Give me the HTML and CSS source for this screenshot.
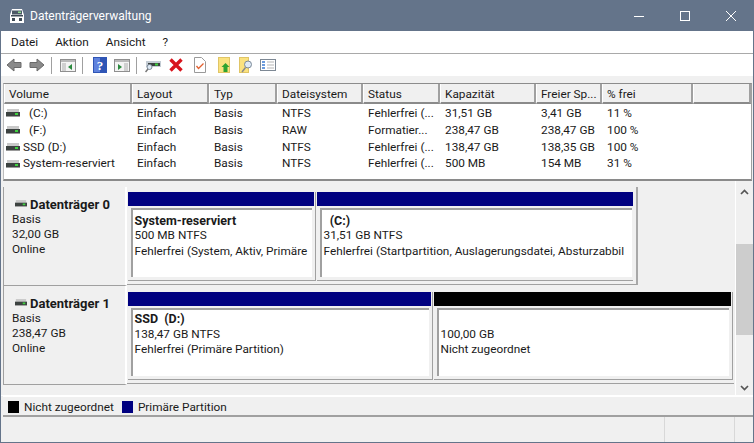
FILE: index.html
```html
<!DOCTYPE html>
<html lang="de">
<head>
<meta charset="utf-8">
<title>Datenträgerverwaltung</title>
<link rel="stylesheet" href="styles.css">
</head>
<body>
<svg class="defs" width="0" height="0">
  <symbol id="drive" viewBox="0 0 14 8">
    <rect x="1" y="0" width="12" height="3" fill="#c9c9c9"/>
    <rect x="0" y="3" width="14" height="4" fill="#3c4240"/>
    <rect x="9" y="4" width="3" height="2" fill="#3fd13f"/>
    <rect x="0" y="7" width="14" height="1" fill="#9a9a9a"/>
  </symbol>
</svg>
<div class="window">
  <header class="titlebar">
    <svg class="app-icon" viewBox="0 0 16 16"><path d="M3 1h10l2 6v8H1V7z" fill="#fff"/><rect x="2" y="7" width="12" height="1.5" fill="#3d4a55"/><rect x="3" y="2.5" width="10" height="4" fill="#4b5866"/><rect x="9" y="3.5" width="3" height="1.5" fill="#8fe08f"/><rect x="3" y="10" width="3" height="3" fill="#3d4a55"/><rect x="10" y="10" width="3" height="3" fill="#3d4a55"/></svg>
    <span class="title">Datenträgerverwaltung</span>
    <div class="winbtns">
      <svg viewBox="0 0 46 30"><rect x="18" y="15" width="10" height="1" fill="#fff"/></svg>
      <svg viewBox="0 0 46 30"><rect x="18.5" y="10.5" width="9" height="9" fill="none" stroke="#fff"/></svg>
      <svg viewBox="0 0 46 30"><path d="M18 10l10 10M28 10L18 20" stroke="#fff" fill="none"/></svg>
    </div>
  </header>
  <nav class="menubar"><span>Datei</span><span>Aktion</span><span>Ansicht</span><span>?</span></nav>
  <div class="toolbar">
    <svg class="tool" viewBox="0 0 16 16"><path d="M1 8l7-6v3.500h7v5H8V14z" fill="#8a8a8a" stroke="#6a6a6a"/></svg>
    <svg class="tool" viewBox="0 0 16 16"><path d="M15 8L8 2v3.500H1v5h7V14z" fill="#8a8a8a" stroke="#6a6a6a"/></svg>
    <i class="sep"></i>
    <svg class="tool" viewBox="0 0 16 16"><rect x=".5" y="2.500" width="15" height="12" fill="#f4f4f4" stroke="#8f8f8f"/><rect x="1" y="3" width="14" height="2" fill="#b9b9b9"/><rect x="2" y="6" width="4" height="8" fill="#d0d0d0"/><path d="M12 7v6L8 10z" fill="#2b8a3e"/></svg>
    <i class="sep"></i>
    <svg class="tool help" viewBox="0 0 14 16"><rect width="14" height="16" fill="#2f55b5"/><rect x="1" y="1" width="6" height="14" fill="#5f82dd"/><text x="7" y="13" class="help-q">?</text></svg>
    <svg class="tool" viewBox="0 0 16 16"><rect x=".5" y="2.500" width="15" height="12" fill="#f4f4f4" stroke="#8f8f8f"/><rect x="1" y="3" width="14" height="2" fill="#b9b9b9"/><rect x="10" y="6" width="4" height="8" fill="#d0d0d0"/><path d="M4 7v6l4-3z" fill="#2b8a3e"/></svg>
    <i class="sep"></i>
    <svg class="tool" viewBox="0 0 16 16"><rect x="1" y="4" width="15" height="6" fill="#c4ccd4"/><rect x="3" y="6" width="12" height="3" fill="#3c4240"/><rect x="10" y="6.500" width="3" height="2" fill="#3fd13f"/><circle cx="4.500" cy="10" r="2.500" fill="#dfeaf5" stroke="#7c8a99"/><path d="M3 12l-2.500 3" stroke="#777" stroke-width="1.500"/></svg>
    <svg class="tool" viewBox="0 0 16 16"><path d="M2.500 2.500l11 11M13.500 2.500l-11 11" stroke="#d8141c" stroke-width="3.400"/></svg>
    <svg class="tool narrow" viewBox="0 0 12 16"><path d="M.5.500h7l4 4v11H.500z" fill="#fff" stroke="#9a9a9a"/><path d="M2.500 9l2 2.500 5-5" fill="none" stroke="#e2602f" stroke-width="1.300"/></svg>
    <svg class="tool narrow" viewBox="0 0 12 16"><rect x=".5" y=".5" width="11" height="15" fill="#fbe27f" stroke="#e0c566"/><path d="M7.500 6l4 4H9.500v5h-4v-5H3.500z" fill="#2fa32f"/></svg>
    <svg class="tool find" viewBox="0 0 14 16"><rect x=".5" y=".5" width="9" height="15" fill="#fbe27f" stroke="#e0c566"/><circle cx="9" cy="7.500" r="3.500" fill="#dfeaf5" stroke="#7c8a99"/><path d="M6.500 10.500L3 15" stroke="#8a8a8a" stroke-width="1.500"/></svg>
    <svg class="tool" viewBox="0 0 16 16"><rect x=".5" y="2.500" width="15" height="11" fill="#fff" stroke="#7d8894"/><path d="M2 5h3M2 8h3M2 11h3" stroke="#3d7bd1" stroke-width="1.500"/><path d="M7 5h7M7 8h7M7 11h7" stroke="#b5b5b5"/></svg>
  </div>
  <div class="band"></div>
  <section class="list">
    <div class="row head">
      <span>Volume</span><span>Layout</span><span>Typ</span><span>Dateisystem</span><span>Status</span><span>Kapazität</span><span>Freier Sp...</span><span>% frei</span><span></span>
    </div>
    <div class="row"><span class="vol spaced"><svg class="drive"><use href="#drive"/></svg> (C:)</span><span>Einfach</span><span>Basis</span><span>NTFS</span><span>Fehlerfrei (...</span><span>31,51 GB</span><span>3,41 GB</span><span>11 %</span></div>
    <div class="row"><span class="vol spaced"><svg class="drive"><use href="#drive"/></svg> (F:)</span><span>Einfach</span><span>Basis</span><span>RAW</span><span>Formatier...</span><span>238,47 GB</span><span>238,47 GB</span><span>100 %</span></div>
    <div class="row"><span class="vol"><svg class="drive"><use href="#drive"/></svg>SSD (D:)</span><span>Einfach</span><span>Basis</span><span>NTFS</span><span>Fehlerfrei (...</span><span>138,47 GB</span><span>138,35 GB</span><span>100 %</span></div>
    <div class="row"><span class="vol"><svg class="drive"><use href="#drive"/></svg>System-reserviert</span><span>Einfach</span><span>Basis</span><span>NTFS</span><span>Fehlerfrei (...</span><span>500 MB</span><span>154 MB</span><span>31 %</span></div>
  </section>
  <section class="lower">
    <div class="disks">
      <article class="disk disk0">
        <div class="disk-label">
          <h2><svg class="drive"><use href="#drive"/></svg>Datenträger 0</h2>
          <p>Basis</p><p>32,00 GB</p><p>Online</p>
        </div>
        <div class="parts parts0">
          <div class="part p-sys">
            <div class="bar blue"></div>
            <div class="pbody"><b>System-reserviert</b><p>500 MB NTFS</p><p>Fehlerfrei (System, Aktiv, Primäre</p></div>
          </div>
          <div class="part p-c">
            <div class="bar blue"></div>
            <div class="pbody"><b class="spaced">  (C:)</b><p>31,51 GB NTFS</p><p>Fehlerfrei (Startpartition, Auslagerungsdatei, Absturzabbil</p></div>
          </div>
        </div>
      </article>
      <article class="disk disk1">
        <div class="disk-label">
          <h2><svg class="drive"><use href="#drive"/></svg>Datenträger 1</h2>
          <p>Basis</p><p>238,47 GB</p><p>Online</p>
        </div>
        <div class="parts parts1">
          <div class="part p-ssd">
            <div class="bar blue"></div>
            <div class="pbody"><b class="spaced">SSD  (D:)</b><p>138,47 GB NTFS</p><p>Fehlerfrei (Primäre Partition)</p></div>
          </div>
          <div class="part p-free">
            <div class="bar black"></div>
            <div class="pbody"><b>&nbsp;</b><p>100,00 GB</p><p>Nicht zugeordnet</p></div>
          </div>
        </div>
      </article>
    </div>
    <div class="scrollbar">
      <svg viewBox="0 0 9 6"><path d="M1 5l3.500-3.500L8 5" fill="none" stroke="#555" stroke-width="1.700"/></svg>
      <div class="track"><div class="thumb"></div></div>
      <svg viewBox="0 0 9 6"><path d="M1 1l3.500 3.500L8 1" fill="none" stroke="#555" stroke-width="1.700"/></svg>
    </div>
  </section>
  <div class="legend">
    <i class="swatch black"></i><span class="legend-first">Nicht zugeordnet</span>
    <i class="swatch blue"></i><span>Primäre Partition</span>
  </div>
  <footer class="status"><div></div><div></div><div></div></footer>
</div>
</body>
</html>
```

FILE: styles.css
```css
* { box-sizing: border-box; }
html, body { margin: 0; padding: 0; }
body {
  width: 754px;
  height: 443px;
  overflow: hidden;
  font-family: Roboto, "Open Sans", sans-serif;
  font-size: 11.8px;
  color: #1a1a1a;
}
p, h2 { margin: 0; font-weight: normal; }
.defs { position: absolute; }
.window {
  width: 754px;
  height: 443px;
  display: flex;
  flex-direction: column;
  background: #f0f0f0;
  border: 1px solid #64748a;
  border-top: 0;
}
.titlebar {
  height: 31px;
  flex: none;
  margin: 0 -1px;
  background: #64748a;
  color: #fff;
  display: flex;
  align-items: center;
  padding-left: 9px;
  font-size: 12px;
}
.app-icon { width: 16px; height: 16px; }
.title { margin-left: 5px; }
.winbtns { margin-left: auto; display: flex; }
.winbtns svg { width: 46px; height: 30px; }
.menubar {
  height: 23px;
  flex: none;
  background: #fff;
  border-bottom: 1px solid #a9a9a9;
  display: flex;
  align-items: center;
  padding-left: 10px;
  gap: 17px;
}
.toolbar {
  height: 22px;
  flex: none;
  background: #fff;
  display: flex;
  align-items: center;
  padding-left: 5px;
  gap: 7px;
}
.tool { width: 16px; height: 16px; flex: none; }
.tool.help { width: 14px; margin-left: 2px; }
.help-q { font: bold 13px "Liberation Serif", serif; fill: #fff; text-anchor: middle; }
.tool.narrow { width: 12px; margin: 0 2px 0 3px; }
.tool.find { width: 14px; }
.sep { width: 1px; height: 17px; background: #a0a0a0; margin: 0 1px 0 -1px; }
.band { height: 7px; flex: none; background: #f0f0f0; }
.list {
  height: 98px;
  flex: none;
  margin-left: 2px;
  margin-right: 1px;
  background: #fff;
  border-top: 1px solid #8c8c8c;
  border-left: 1px solid #bdbdbd;
  border-bottom: 2px solid #8a8a8a;
  border-right: 1px solid #a0a0a0;
}
.row {
  display: grid;
  grid-template-columns: 128px 77px 68px 86px 77px 96px 66px 91px 1fr;
  height: 16.8px;
  line-height: 16.8px;
  white-space: nowrap;
}
.row > span { padding-left: 5px; overflow: hidden; }
.row .vol { padding-left: 2px; display: flex; align-items: center; }
.spaced { white-space: pre; }
.vol.spaced .drive { margin-right: 6px; }
.drive { width: 14px; height: 8px; flex: none; margin-right: 3px; }
.row.head {
  height: 20px;
  line-height: 20px;
  background: #f0f0f0;
  margin-bottom: 1px;
}
.row.head > span {
  padding-left: 4px;
  border-right: 2px solid #a0a0a0;
  border-bottom: 2px solid #8a8a8a;
  border-left: 1px solid #fff;
}
.lower {
  height: 215px;
  flex: none;
  display: flex;
  padding-left: 2px;
  border-bottom: 1px solid #fff;
}
.disks {
  flex: 1;
  padding-top: 6px;
  display: flex;
  flex-direction: column;
  background: #f0f0f0;
}
.disk {
  display: flex;
  align-items: flex-start;
  flex: none;
  height: 99px;
  border-left: 1px solid #a0a0a0;
}
.disk-label {
  width: 123px;
  height: 99px;
  flex: none;
  padding: 9px 0 0 8px;
  border-right: 2px solid #fff;
  border-bottom: 1px solid #a0a0a0;
  line-height: 15px;
}
.disk-label h2 {
  font-weight: 700;
  font-size: 13px;
  display: flex;
  align-items: center;
  height: 16px;
  margin-left: 3px;
}
.disk-label h2 .drive { width: 12px; height: 7px; margin-top: -2px; }
.parts {
  display: flex;
  height: 98px;
  gap: 1px;
  padding: 5px 3px 3px 1px;
  border-bottom: 1px solid #a0a0a0;
}
.parts0 { width: 511px; border-right: 2px solid #a8a8a8; }
.parts1 { width: 607px; padding: 6px 1px 3px 1px; }
.part {
  display: flex;
  flex-direction: column;
  border-bottom: 1px solid #a0a0a0;
}
.p-sys { width: 188px; border-right: 1px solid #a0a0a0; }
.p-c { flex: 1; }
.p-ssd { width: 305px; border-right: 1px solid #a0a0a0; }
.p-free { flex: 1; border-right: 1px solid #a0a0a0; }
.bar { height: 14px; flex: none; margin-right: 1px; }
.p-c .bar { margin-right: 0; }
.blue { background: #000080; }
.black { background: #000; }
.pbody {
  flex: 1;
  min-height: 0;
  margin: 2px 3px 3px 3px;
  background: #fff;
  border-top: 2px solid #a0a0a0;
  border-left: 2px solid #a0a0a0;
  padding: 2.5px 0 0 1.5px;
  line-height: 15.5px;
  white-space: nowrap;
  overflow: hidden;
}
.p-c .pbody { margin-right: 1px; }
.parts1 .pbody { padding-top: 1px; }
.pbody b { display: block; font-weight: 700; font-size: 12.5px; }
.scrollbar {
  width: 18px;
  flex: none;
  background: #f0f0f0;
  border-left: 1px solid #fff;
  display: flex;
  flex-direction: column;
  align-items: center;
  padding: 8px 0 4px;
}
.scrollbar svg { width: 9px; height: 6px; flex: none; }
.track { flex: 1; width: 100%; padding-top: 49px; }
.thumb { height: 91px; background: #cdcdcd; }
.legend {
  height: 21px;
  flex: none;
  border-top: 1px solid #fff;
  border-bottom: 2px solid #a0a0a0;
  margin: 0 0 0 2px;
  display: flex;
  align-items: center;
  padding: 2px 0 0 5px;
  gap: 5px;
}
.legend-first { margin-right: 3px; }
.swatch { width: 11px; height: 12px; flex: none; }
.status {
  flex: 1;
  min-height: 0;
  display: grid;
  grid-template-columns: 664px 1fr 18px;
}
.status div { border-right: 1px solid #d8d8d8; }
.status div:last-child { border-right: 0; }
```
